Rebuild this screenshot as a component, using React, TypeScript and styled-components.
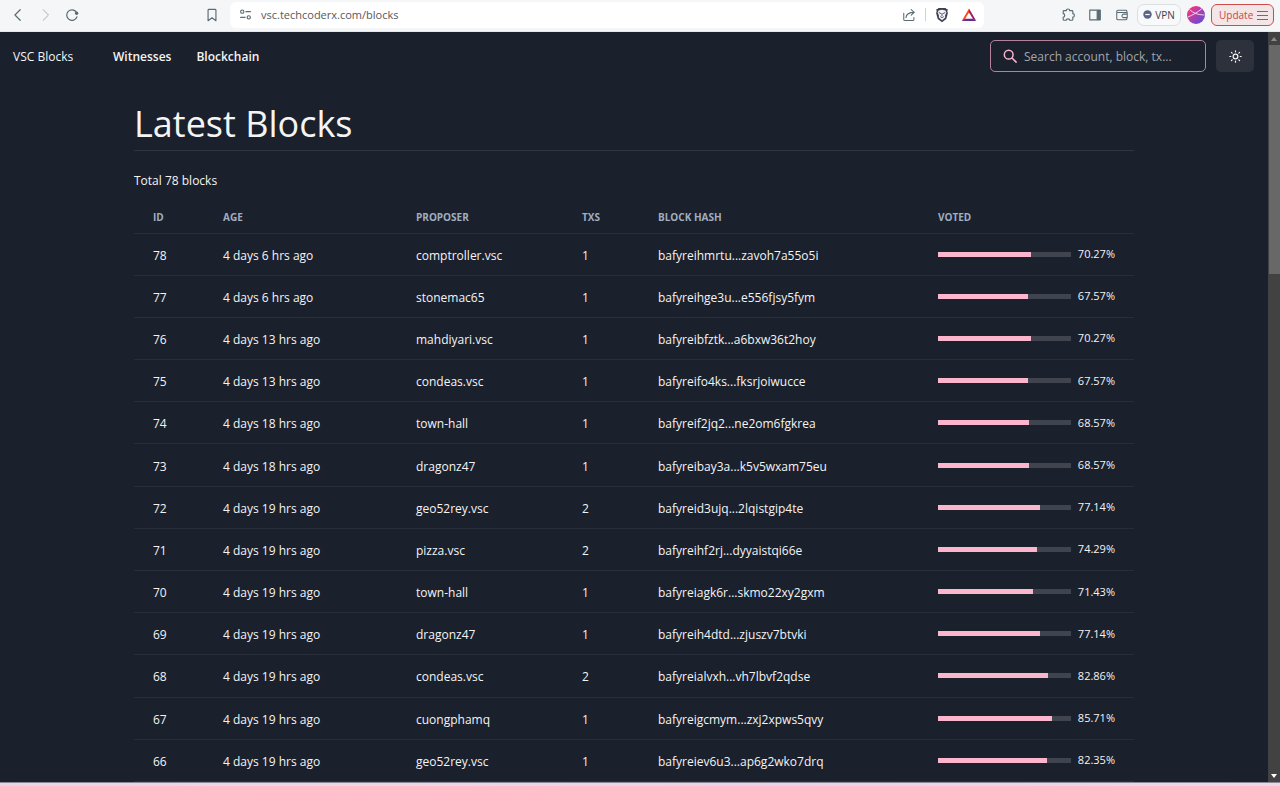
import React from "react";
import styled, { createGlobalStyle } from "styled-components";

const GlobalStyle = createGlobalStyle`
  * { box-sizing: border-box; }
  body {
    margin: 0;
    background: #1a202c;
    font-family: "Open Sans", "Noto Sans", sans-serif;
    font-size: 12px;
    line-height: 20px;
    color: #f4f4f5;
  }
  button, input { font: inherit; color: inherit; }
`;

const Window = styled.div`
  display: flex;
  flex-direction: column;
  min-height: 100vh;
`;

/* Browser toolbar */

const BrowserBar = styled.header`
  display: flex;
  align-items: center;
  height: 32px;
  padding: 0 6px 2px 10px;
  background: #f5f6f8;
  border-bottom: 1px solid #e6e8ea;
  color: #5b6b73;
`;

const BarStart = styled.div`
  display: flex;
  flex: none;
  align-items: center;
  justify-content: space-between;
  width: 220px;
  padding-right: 10px;
`;

const BarEnd = styled.div`
  display: flex;
  flex: none;
  align-items: center;
  justify-content: flex-end;
  gap: 7px;
  width: 290px;
`;

const BarGroup = styled.div`
  display: flex;
  align-items: center;
  gap: 11px;
`;

const IconButton = styled.button`
  display: flex;
  flex: none;
  align-items: center;
  justify-content: center;
  width: 16px;
  height: 16px;
  padding: 0;
  border: 0;
  background: none;
`;

const Spacer = styled.div`
  flex: 1;
`;

const AddressBar = styled.div`
  display: flex;
  align-items: center;
  flex: 1;
  min-width: 0;
  height: 26px;
  padding: 0 7px;
  border-radius: 6px;
  background: #ffffff;
`;

const AddressInput = styled.input`
  flex: 1;
  min-width: 0;
  margin-left: 8px;
  padding: 0;
  border: 0;
  outline: 0;
  background: none;
  font-size: 11px;
  color: #56595e;
`;

const Divider = styled.span`
  width: 1px;
  height: 13px;
  margin: 0 8px;
  background: #cfd2d5;
`;

const VpnButton = styled.button`
  display: flex;
  align-items: center;
  justify-content: center;
  gap: 3px;
  width: 44px;
  height: 22px;
  padding: 0;
  border: 1px solid #dcdfe2;
  border-radius: 7px;
  background: #f8f9fa;
  font-size: 10px;
  color: #3b4248;
`;

const UpdateButton = styled.button`
  display: flex;
  align-items: center;
  justify-content: space-between;
  width: 63px;
  height: 22px;
  padding: 0 5px 0 7px;
  border: 1px solid #cf4a4a;
  border-radius: 6px;
  background: #f4e6e6;
  font-size: 10px;
  color: #c94747;
`;

/* Web page */

const Viewport = styled.div`
  display: flex;
  flex: 1;
`;

const Page = styled.div`
  flex: 1;
  min-width: 0;
`;

const NavBar = styled.nav`
  display: flex;
  align-items: center;
  height: 48px;
  padding: 0 14px 0 13px;
`;

const Brand = styled.a`
  width: 100px;
  padding-top: 2px;
  color: #f4f4f5;
  text-decoration: none;
`;

const NavLink = styled.a`
  margin-right: 25px;
  padding-top: 2px;
  font-weight: 600;
  color: #f4f4f5;
  text-decoration: none;
`;

const SearchBox = styled.label`
  display: flex;
  align-items: center;
  gap: 7px;
  width: 216px;
  height: 32px;
  padding: 0 12px;
  border: 1px solid #b5829c;
  border-radius: 5px;
  color: #fbb6ce;
`;

const SearchInput = styled.input`
  flex: 1;
  min-width: 0;
  padding: 2px 0 0;
  border: 0;
  outline: 0;
  background: none;
  color: #f4f4f5;
  &::placeholder { color: #a3a6ac; opacity: 1; }
`;

const ThemeButton = styled.button`
  display: flex;
  align-items: center;
  justify-content: center;
  width: 38px;
  height: 32px;
  margin-left: 10px;
  padding: 0;
  border: 0;
  border-radius: 5px;
  background: #2c313c;
`;

const Content = styled.main`
  max-width: 1000px;
  margin: 0 auto;
  padding-top: 18px;
`;

const Title = styled.h1`
  margin: 0;
  border-bottom: 1px solid #303641;
  font-size: 36px;
  line-height: 52px;
  font-weight: 400;
`;

const Total = styled.p`
  margin: 20px 0 9px;
`;

const Table = styled.table`
  width: 100%;
  height: 582px;
  table-layout: fixed;
  border-collapse: collapse;
`;

const Col = styled.col<{ $width?: number }>`
  width: ${(p) => (p.$width ? `${p.$width}px` : "auto")};
`;

const HeadCell = styled.th`
  height: 33px;
  padding: 2px 19px 0;
  border-bottom: 1px solid #272e3a;
  text-align: left;
  font-size: 10px;
  font-weight: 700;
  color: #a0aec0;
`;

const Cell = styled.td`
  height: 42px;
  padding: 3px 19px 0;
  border-bottom: 1px solid #272e3a;
  white-space: nowrap;
`;

const VoteCell = styled(Cell)`
  padding-top: 0;
`;

const Vote = styled.div`
  display: flex;
  align-items: center;
  gap: 7px;
  font-size: 11px;
`;

const Track = styled.div`
  width: 133px;
  height: 5px;
  background: #40444f;
`;

const Fill = styled.div`
  height: 5px;
  background: #fbb6ce;
`;

const ScrollBar = styled.div`
  display: flex;
  flex-direction: column;
  align-items: center;
  width: 12px;
  background: #424242;
`;

const ScrollArrow = styled.div`
  display: flex;
  align-items: center;
  justify-content: center;
  height: 13px;
`;

const Thumb = styled.div`
  width: 11px;
  height: 229px;
  background: #686868;
`;

const DesktopEdge = styled.div`
  height: 4px;
  border-top: 1px solid #8c8794;
  background: linear-gradient(90deg, #e6d5ea, #f0d6e4 30%, #e6d3ea 60%, #ecd8ea);
`;

type Block = [number, string, string, number, string, number];

const blocks: Block[] = [
  [78, "4 days 6 hrs ago", "comptroller.vsc", 1, "bafyreihmrtu...zavoh7a55o5i", 70.27],
  [77, "4 days 6 hrs ago", "stonemac65", 1, "bafyreihge3u...e556fjsy5fym", 67.57],
  [76, "4 days 13 hrs ago", "mahdiyari.vsc", 1, "bafyreibfztk...a6bxw36t2hoy", 70.27],
  [75, "4 days 13 hrs ago", "condeas.vsc", 1, "bafyreifo4ks...fksrjoiwucce", 67.57],
  [74, "4 days 18 hrs ago", "town-hall", 1, "bafyreif2jq2...ne2om6fgkrea", 68.57],
  [73, "4 days 18 hrs ago", "dragonz47", 1, "bafyreibay3a...k5v5wxam75eu", 68.57],
  [72, "4 days 19 hrs ago", "geo52rey.vsc", 2, "bafyreid3ujq...2lqistgip4te", 77.14],
  [71, "4 days 19 hrs ago", "pizza.vsc", 2, "bafyreihf2rj...dyyaistqi66e", 74.29],
  [70, "4 days 19 hrs ago", "town-hall", 1, "bafyreiagk6r...skmo22xy2gxm", 71.43],
  [69, "4 days 19 hrs ago", "dragonz47", 1, "bafyreih4dtd...zjuszv7btvki", 77.14],
  [68, "4 days 19 hrs ago", "condeas.vsc", 2, "bafyreialvxh...vh7lbvf2qdse", 82.86],
  [67, "4 days 19 hrs ago", "cuongphamq", 1, "bafyreigcmym...zxj2xpws5qvy", 85.71],
  [66, "4 days 19 hrs ago", "geo52rey.vsc", 1, "bafyreiev6u3...ap6g2wko7drq", 82.35],
];

const Icon = ({ size = 14, width = 1.2, children }: { size?: number; width?: number; children: React.ReactNode }) => (
  <svg width={size} height={size} viewBox="0 0 16 16" fill="none" stroke="currentColor" strokeWidth={width} strokeLinecap="round" strokeLinejoin="round" aria-hidden="true">
    {children}
  </svg>
);

const Toolbar = () => (
  <BrowserBar>
    <BarStart>
      <BarGroup>
        <IconButton aria-label="Back"><Icon width={1.4}><path d="M10.5 2 4.5 8l6 6" /></Icon></IconButton>
        <IconButton aria-label="Forward"><Icon width={1.1}><path stroke="#a3adb3" d="m6 2 6 6-6 6" /></Icon></IconButton>
        <IconButton aria-label="Reload">
          <Icon width={1.4}><path d="M13.6 10.2A6 6 0 1 1 13 4.8" /><circle cx="13.3" cy="6" r="1.9" fill="currentColor" stroke="none" /></Icon>
        </IconButton>
      </BarGroup>
      <IconButton aria-label="Bookmark"><Icon width={1.3}><path d="M3.5 2.500a1 1 0 0 1 1-1h7a1 1 0 0 1 1 1v12L8 11.200l-4.500 3.300z" /></Icon></IconButton>
    </BarStart>
    <AddressBar>
      <IconButton aria-label="Site settings">
        <Icon size={13} width={1.4}><circle cx="4" cy="4.5" r="2" /><path d="M8.500 4.500H14" /><circle cx="12" cy="11.5" r="2" /><path d="M2 11.500h5.500" /></Icon>
      </IconButton>
      <AddressInput type="text" aria-label="Address" defaultValue="vsc.techcoderx.com/blocks" />
      <IconButton aria-label="Share">
        <Icon><path d="M2 6v7a1.300 1.300 0 0 0 1.300 1.300h9a1.300 1.300 0 0 0 1.300-1.300v-2" /><path d="M4.500 11c.3-4 3-6 9.500-6M10.500 1.800 14 5l-3.500 3.200" /></Icon>
      </IconButton>
      <Divider />
      <BarGroup>
        <IconButton aria-label="Shields">
          <svg width="14" height="16" viewBox="0 0 14 16" aria-hidden="true">
            <path d="M3.500 1h7l1 1 1.300.3-.5 2 .6 1.600-1.600 6L7 15.300 2.700 11.900l-1.600-6 .6-1.600-.5-2L2.500 2z" fill="#3e4058" />
            <path d="M3.600 3.400 7 2.800l3.400.6 1 2-1.400 3 .2 2L7 13.200l-3.200-2.800.2-2-1.400-3z" fill="#f3f4f6" />
            <path d="M3.800 5.500 6 6.600M10.200 5.500 8 6.600M7 6v3M5.300 9.600 7 10.600l1.700-1" stroke="#3e4058" strokeWidth=".9" fill="none" />
          </svg>
        </IconButton>
        <IconButton aria-label="Rewards">
          <svg width="16" height="14" viewBox="0 0 16 14" aria-hidden="true">
            <path d="M8 .5.700 13 4 11l4-6.500z" fill="#ff4724" />
            <path d="M8 .5 15.300 13 12 11 8 4.500z" fill="#9e1f63" />
            <path d="M.7 13h14.600L12 10.800H4z" fill="#662d91" />
          </svg>
        </IconButton>
      </BarGroup>
    </AddressBar>
    <BarEnd>
      <BarGroup>
        <IconButton aria-label="Extensions">
          <Icon width={1.3}><path d="M3.500 3H6a2 1.800 0 0 1 4 0h2.500a1 1 0 0 1 1 1v2.500a1.800 2 0 0 1 0 4V13a1 1 0 0 1-1 1H10a2 1.600 0 0 0-4 0H3.500a1 1 0 0 1-1-1v-2.500a1.700 2 0 0 0 0-4V4a1 1 0 0 1 1-1z" /></Icon>
        </IconButton>
        <IconButton aria-label="Sidebar">
          <Icon width={1.3}><path d="M2 2.500h12v11H2z" /><path d="M10.500 3h3v10h-3z" fill="currentColor" /></Icon>
        </IconButton>
        <IconButton aria-label="Wallet">
          <Icon><path d="M13.500 5V3.500a1 1 0 0 0-1-1h-9A1.500 1.500 0 0 0 2 4v8a1.500 1.500 0 0 0 1.500 1.500h9a1 1 0 0 0 1-1V11M2 4.200c0 .8.700 1 1.500 1h10.500V11h-4a2 2 0 0 1 0-4h4" /></Icon>
        </IconButton>
      </BarGroup>
      <VpnButton>
        <svg width="9" height="9" viewBox="0 0 9 9" aria-hidden="true"><circle cx="4.5" cy="4.5" r="4.2" fill="#5c6285" /><path d="M2.300 4.500h4.400" stroke="#fff" strokeWidth="1.2" /></svg>
        VPN
      </VpnButton>
      <IconButton aria-label="Profile">
        <svg width="18" height="18" viewBox="0 0 18 18" style={{ flex: "none" }} aria-hidden="true">
          <defs><linearGradient id="avatar" x1="0" y1="0" x2="1" y2="1"><stop offset=".2" stopColor="#e8358c" /><stop offset="1" stopColor="#4b50e6" /></linearGradient></defs>
          <circle cx="9" cy="9" r="9" fill="url(#avatar)" />
          <path d="M1 11C6 9 11 6 15 2.500M2.500 3.500C6 7 11 9 17.500 9" stroke="#f6dff0" strokeWidth=".9" fill="none" />
        </svg>
      </IconButton>
      <UpdateButton>
        Update
        <svg width="11" height="10" viewBox="0 0 11 10" stroke="currentColor" aria-hidden="true"><path d="M0 1.500h11M0 5.500h11M0 9.500h11" /></svg>
      </UpdateButton>
    </BarEnd>
  </BrowserBar>
);

export default function App() {
  return (
    <Window>
      <GlobalStyle />
      <Toolbar />
      <Viewport>
        <Page>
          <NavBar>
            <Brand href="#">VSC Blocks</Brand>
            <NavLink href="#witnesses">Witnesses</NavLink>
            <NavLink href="#blockchain">Blockchain</NavLink>
            <Spacer />
            <SearchBox>
              <Icon width={1.7}><circle cx="6.5" cy="6.5" r="5" /><path d="m10.300 10.300 4.700 4.700" /></Icon>
              <SearchInput type="text" aria-label="Search" placeholder="Search account, block, tx..." />
            </SearchBox>
            <ThemeButton aria-label="Toggle theme">
              <Icon size={13} width={1.5}><circle cx="8" cy="8" r="2.900" /><path d="M8 1v1.200M8 13.800V15M1 8h1.200M13.800 8H15M3 3l.9.9M12.100 12.100l.9.9M3 13l.9-.9M12.100 3.900 13 3" /></Icon>
            </ThemeButton>
          </NavBar>
          <Content>
            <Title>Latest Blocks</Title>
            <Total>Total 78 blocks</Total>
            <Table>
              <colgroup>
                <Col $width={70} /><Col $width={193} /><Col $width={166} /><Col $width={76} /><Col $width={280} /><Col />
              </colgroup>
              <thead>
                <tr>
                  {["ID", "AGE", "PROPOSER", "TXS", "BLOCK HASH", "VOTED"].map((h) => <HeadCell key={h} scope="col">{h}</HeadCell>)}
                </tr>
              </thead>
              <tbody>
                {blocks.map(([id, age, proposer, txs, hash, voted]) => (
                  <tr key={id}>
                    <Cell>{id}</Cell>
                    <Cell>{age}</Cell>
                    <Cell>{proposer}</Cell>
                    <Cell>{txs}</Cell>
                    <Cell>{hash}</Cell>
                    <VoteCell>
                      <Vote>
                        <Track><Fill style={{ width: `${voted}%` }} /></Track>
                        {voted.toFixed(2)}%
                      </Vote>
                    </VoteCell>
                  </tr>
                ))}
              </tbody>
            </Table>
          </Content>
        </Page>
        <ScrollBar aria-hidden="true">
          <ScrollArrow><svg width="6" height="4" viewBox="0 0 6 4"><path d="M0 4 3 0l3 4z" fill="#8b8b8b" /></svg></ScrollArrow>
          <Thumb />
          <Spacer />
          <ScrollArrow><svg width="6" height="4" viewBox="0 0 6 4"><path d="M0 0h6L3 4z" fill="#ffffff" /></svg></ScrollArrow>
        </ScrollBar>
      </Viewport>
      <DesktopEdge />
    </Window>
  );
}
